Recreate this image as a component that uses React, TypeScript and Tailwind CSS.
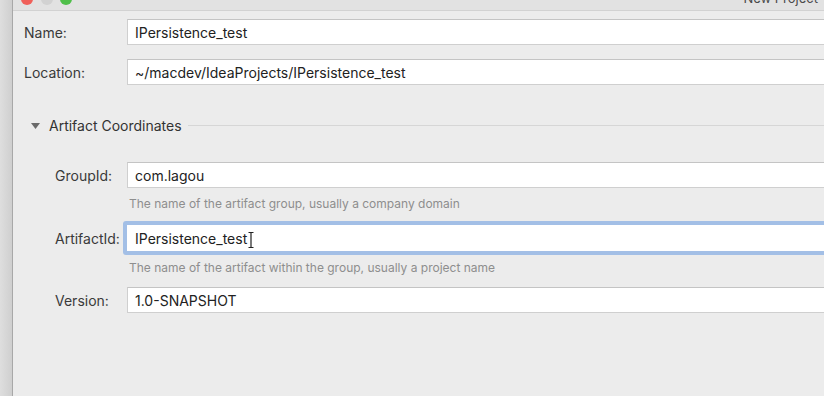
import React from "react";

const font = "font-['Inter','Liberation_Sans',sans-serif]";

function Field({
  label,
  value,
  focused,
  indent,
}: {
  label: string;
  value: string;
  focused?: boolean;
  indent?: boolean;
}) {
  return (
    <div className="flex items-center">
      <div className={`${indent ? "pl-[31px]" : ""} w-[103px] shrink-0 whitespace-nowrap text-[14px] text-[#3a3a3a]`}>
        {label}
      </div>
      <div
        className={
          focused
            ? "-ml-[4px] flex h-[34px] w-[720px] shrink-0 items-center rounded-[3px] border-[4px] border-[#a3bfe6] bg-white pl-[8px]"
            : "flex h-[26px] w-[720px] shrink-0 items-center border border-[#cfcfcf] border-t-[#c4c4c4] bg-white pl-[7px]"
        }
      >
        <span className="whitespace-nowrap text-[14px] text-[#222]">{value}</span>
        {focused ? (
          <svg className="ml-[1px] mt-[3px]" width="6" height="16" viewBox="0 0 6 16">
            <path d="M0.5 0.5h5M3 0.5v15M0.5 15.5h5" stroke="#222" strokeWidth="1.2" fill="none" />
          </svg>
        ) : null}
      </div>
    </div>
  );
}

function Hint({ text }: { text: string }) {
  return <div className="whitespace-nowrap pl-[105px] text-[12px] leading-[16px] text-[#8e8e8e]">{text}</div>;
}

export default function App() {
  return (
    <div className={`flex h-[396px] w-[824px] overflow-hidden bg-[#d9d9d9] ${font}`}>
      <div className="w-[12px] shrink-0 bg-gradient-to-r from-[#dedede] to-[#cfcfcf]" />
      <div className="flex min-w-0 flex-1 flex-col overflow-hidden border-l border-[#a8a8a8]">
        <div className="relative h-[11px] shrink-0 border-b border-[#d2d2d2] bg-[#e2e2e2]">
          <span className="absolute left-[8px] top-[-7px] h-[12px] w-[12px] rounded-full bg-[#f0605a]" />
          <span className="absolute left-[28px] top-[-7px] h-[12px] w-[12px] rounded-full bg-[#d2d2d2]" />
          <span className="absolute left-[47px] top-[-7px] h-[12px] w-[12px] rounded-full bg-[#4fbf4a]" />
          <span className="absolute right-[6px] top-[-11px] whitespace-nowrap text-[13px] text-[#4a4a4a]">New Project</span>
        </div>

        <div className="flex-1 bg-[#ececec] pl-[11px] pt-[8px]">
          <div className="flex flex-col gap-[14px]">
            <Field label="Name:" value="IPersistence_test" />
            <Field label="Location:" value="~/macdev/IdeaProjects/IPersistence_test" />
          </div>

          <div className="mt-[30px] flex items-center">
            <svg className="ml-[7px] shrink-0" width="9" height="6" viewBox="0 0 9 6">
              <path d="M0 0h9L4.5 6z" fill="#6a6a6a" />
            </svg>
            <span className="ml-[9px] whitespace-nowrap text-[14px] text-[#333]">Artifact Coordinates</span>
            <div className="ml-[6px] h-px flex-1 bg-[#d6d6d6]" />
          </div>

          <div className="mt-[26px] flex flex-col">
            <Field label="GroupId:" value="com.lagou" indent />
            <div className="mt-[8px]">
              <Hint text="The name of the artifact group, usually a company domain" />
            </div>
            <div className="mt-[9px]">
              <Field label="ArtifactId:" value="IPersistence_test" indent focused />
            </div>
            <div className="mt-[5px]">
              <Hint text="The name of the artifact within the group, usually a project name" />
            </div>
            <div className="mt-[11px]">
              <Field label="Version:" value="1.0-SNAPSHOT" indent />
            </div>
          </div>
        </div>
      </div>
    </div>
  );
}
